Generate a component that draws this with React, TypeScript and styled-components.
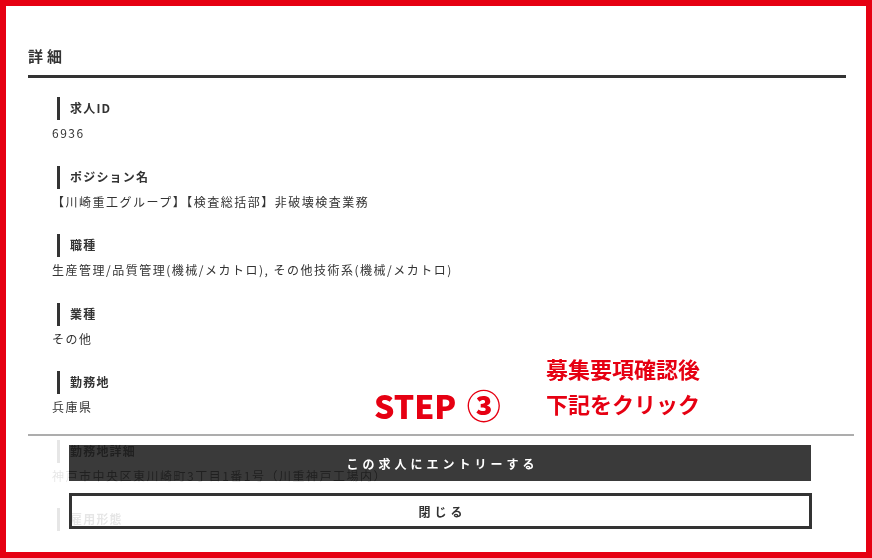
import React from "react";
import styled, { createGlobalStyle } from "styled-components";

const GlobalStyle = createGlobalStyle`
  html, body { margin: 0; padding: 0; background: #fff; }
  body {
    font-family: "Noto Sans CJK JP", "Noto Sans", "Liberation Sans", sans-serif;
    color: #333;
  }
  * { box-sizing: border-box; }
`;

const Frame = styled.div`
  position: relative;
  width: 872px;
  height: 558px;
  border: 6px solid #e60012;
  background: #fff;
  overflow: hidden;
  display: flex;
  flex-direction: column;
`;

const Body = styled.div`
  flex: 1;
  min-height: 0;
  overflow: hidden;
  margin-bottom: 20px;
  padding: 39.5px 20px 0 22px;
`;

const Heading = styled.h2`
  margin: 0;
  font-size: 15px;
  font-weight: 700;
  line-height: 20px;
  letter-spacing: 4px;
  padding-bottom: 9.5px;
  border-bottom: 3px solid #333;
  color: #333;
`;

const List = styled.dl`
  margin: 0;
  padding: 19px 0 0 24px;
  display: flex;
  flex-direction: column;
  gap: 22.5px;
`;

const Item = styled.div`
  display: flex;
  flex-direction: column;
`;

const Label = styled.dt`
  margin: 0 0 0 5px;
  height: 23px;
  display: flex;
  align-items: center;
  border-left: 3px solid #333;
  padding: 0 0 2px 10px;
  font-size: 12px;
  font-weight: 700;
  letter-spacing: 1.2px;
  color: #333;
`;

const Value = styled.dd`
  margin: 3px 0 0;
  font-size: 12px;
  line-height: 20px;
  letter-spacing: 1.5px;
  color: #333;
`;

const Footer = styled.div`
  position: absolute;
  left: 22px;
  right: 12px;
  bottom: 0;
  border-top: 2px solid #adadad;
  background: rgba(255, 255, 255, 0.88);
  padding: 9px 42px 23px 41px;
  display: flex;
  flex-direction: column;
  gap: 12px;
`;

const Button = styled.button<{ $primary?: boolean }>`
  height: 36px;
  width: 100%;
  margin: 0;
  font-family: inherit;
  font-size: 12px;
  font-weight: 700;
  letter-spacing: 4px;
  padding: 0 0 0 4px;
  cursor: pointer;
  color: ${(p) => (p.$primary ? "#fff" : "#333")};
  border: ${(p) => (p.$primary ? "none" : "3px solid #333")};
  background: transparent;
  ${(p) =>
    p.$primary
      ? `
    backdrop-filter: brightness(0.395) contrast(2.6);
    @supports not (backdrop-filter: blur(1px)) {
      background: #3a3a3a;
    }
  `
      : ""}
`;

const Step = styled.div`
  position: absolute;
  left: 368px;
  top: 382px;
  font-size: 32px;
  line-height: 34px;
  font-weight: 900;
  color: #e60012;
  white-space: nowrap;
  display: flex;
  align-items: center;
`;

const Circled = styled.span`
  font-size: 34px;
  margin-left: 3px;
`;

const Note = styled.div`
  position: absolute;
  left: 540px;
  top: 345px;
  font-size: 22px;
  line-height: 35px;
  font-weight: 700;
  color: #e60012;
  white-space: nowrap;
`;

const items: { label: string; value?: string }[] = [
  { label: "求人ID", value: "6936" },
  { label: "ポジション名", value: "【川崎重工グループ】【検査総括部】非破壊検査業務" },
  { label: "職種", value: "生産管理/品質管理(機械/メカトロ), その他技術系(機械/メカトロ)" },
  { label: "業種", value: "その他" },
  { label: "勤務地", value: "兵庫県" },
  { label: "勤務地詳細", value: "神戸市中央区東川崎町3丁目1番1号（川重神戸工場内）" },
  { label: "雇用形態" },
];

export default function App() {
  return (
    <>
      <GlobalStyle />
      <Frame>
        <Body>
          <Heading>詳細</Heading>
          <List>
            {items.map((it) => (
              <Item key={it.label}>
                <Label>{it.label}</Label>
                {it.value && <Value>{it.value}</Value>}
              </Item>
            ))}
          </List>
        </Body>
        <Step>
          STEP&nbsp;<Circled>③</Circled>
        </Step>
        <Note>
          募集要項確認後
          <br />
          下記をクリック
        </Note>
        <Footer>
          <Button $primary>この求人にエントリーする</Button>
          <Button>閉じる</Button>
        </Footer>
      </Frame>
    </>
  );
}
